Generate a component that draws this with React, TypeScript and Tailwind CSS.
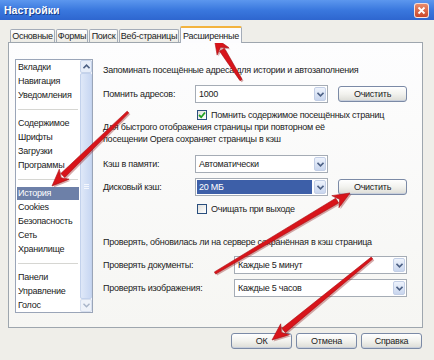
import React from "react";

type Pt = { x1: number; y1: number; x2: number; y2: number };

function Arrow({ x1, y1, x2, y2 }: Pt) {
  const dx = x2 - x1;
  const dy = y2 - y1;
  const len = Math.sqrt(dx * dx + dy * dy);
  const ux = dx / len;
  const uy = dy / len;
  const nx = -uy;
  const ny = ux;
  const headLen = 15;
  const headW = 7;
  const bx = x2 - ux * headLen;
  const by = y2 - uy * headLen;
  const tw = 1.2;
  const hw = 2.8;
  const shaft = [
    [x1 + nx * tw, y1 + ny * tw],
    [bx + nx * hw, by + ny * hw],
    [bx - nx * hw, by - ny * hw],
    [x1 - nx * tw, y1 - ny * tw],
  ];
  const head = [
    [x2, y2],
    [bx + nx * headW - ux * 2, by + ny * headW - uy * 2],
    [bx + ux * 3, by + uy * 3],
    [bx - nx * headW - ux * 2, by - ny * headW - uy * 2],
  ];
  const p = (a: number[][]) => a.map((q) => q.join(",")).join(" ");
  return (
    <g>
      <polygon points={p(shaft)} fill="#8a0c0c" transform="translate(1.5,1.5)" opacity="0.35" />
      <polygon points={p(head)} fill="#8a0c0c" transform="translate(1.5,1.5)" opacity="0.35" />
      <polygon points={p(shaft)} fill="#d8141a" stroke="#a80e12" strokeWidth="0.6" />
      <polygon points={p(head)} fill="#d8141a" stroke="#a80e12" strokeWidth="0.6" />
    </g>
  );
}

function Chevron() {
  return (
    <svg width="7" height="5" viewBox="0 0 7 5">
      <path d="M0.5 0.8 L3.5 3.8 L6.5 0.8" fill="none" stroke="#4d6185" strokeWidth="1.6" />
    </svg>
  );
}

function Combo({ value, selected, w }: { value: string; selected?: boolean; w: string }) {
  return (
    <div className={`flex h-[18px] ${w} items-stretch border border-[#a5acb5] bg-white`}>
      <div className="flex flex-1 items-center p-[1px]">
        <div
          className={`flex h-full w-full items-center pl-[2px] ${
            selected ? "bg-[#3d5fa8] text-white" : "text-[#222]"
          }`}
        >
          {value}
        </div>
      </div>
      <div className="m-[1px] flex w-[12px] items-center justify-center rounded-[2px] border border-[#c3cfe6] bg-gradient-to-b from-[#eef3fc] to-[#c9d6ee]">
        <Chevron />
      </div>
    </div>
  );
}

function Btn({ label, w }: { label: string; w: string }) {
  return (
    <div
      className={`flex h-[16px] ${w} items-center justify-center rounded-[3px] border border-[#7b8aa6] bg-gradient-to-b from-[#ffffff] via-[#f2f2ee] to-[#dcdcd6] text-[#222] shadow-[inset_0_-1px_0_#c8cfdc]`}
    >
      {label}
    </div>
  );
}

function Check({ checked }: { checked?: boolean }) {
  return (
    <div className="flex h-[10px] w-[10px] items-center justify-center border border-[#2a4f7e] bg-gradient-to-br from-[#e0e0dc] to-white">
      {checked && (
        <svg width="8" height="8" viewBox="0 0 8 8">
          <path d="M1 4 L3.2 6.2 L7 1.5" fill="none" stroke="#21a121" strokeWidth="1.8" />
        </svg>
      )}
    </div>
  );
}

const groups: string[][] = [
  ["Вкладки", "Навигация", "Уведомления"],
  ["Содержимое", "Шрифты", "Загрузки", "Программы"],
  ["История", "Cookies", "Безопасность", "Сеть", "Хранилище"],
  ["Панели", "Управление", "Голос"],
];

function ListBox() {
  return (
    <div className="flex h-[254px] w-[78px] shrink-0 border border-[#9aa5b8] bg-white">
      <div className="flex flex-1 flex-col">
        {groups.map((g, gi) => (
          <React.Fragment key={gi}>
            {gi > 0 && (
              <div className="flex h-[14px] items-center px-[2px]">
                <div className="h-px w-full bg-[#d6d6d2]" />
              </div>
            )}
            {g.map((it) => (
              <div key={it} className="flex h-[14px] items-center pl-[1px] pr-[1px]">
                <div
                  className={`flex h-[13px] w-full items-center pl-[1px] ${
                    it === "История" ? "bg-[#6d80a8] text-white" : "text-[#222]"
                  }`}
                >
                  {it}
                </div>
              </div>
            ))}
          </React.Fragment>
        ))}
      </div>
      <div className="flex w-[12px] flex-col bg-[#f4f6fa]">
        <div className="flex h-[13px] items-center justify-center rounded-[2px] border border-[#c6d3ea] bg-[#e6edf9]">
          <svg width="7" height="5" viewBox="0 0 7 5">
            <path d="M0.5 4.2 L3.5 1.2 L6.5 4.2" fill="none" stroke="#4d6185" strokeWidth="1.6" />
          </svg>
        </div>
        <div className="flex flex-1 items-center justify-center rounded-[2px] border border-[#c3d2ec] bg-gradient-to-r from-[#dfe8f8] to-[#c8d7f2]">
          <div className="flex flex-col gap-[1px]">
            <div className="h-px w-[5px] bg-[#f4f7fd]" />
            <div className="h-px w-[5px] bg-[#f4f7fd]" />
            <div className="h-px w-[5px] bg-[#f4f7fd]" />
          </div>
        </div>
        <div className="flex h-[13px] items-center justify-center rounded-[2px] border border-[#d6dfef] bg-[#eef2f9]">
          <svg width="7" height="5" viewBox="0 0 7 5">
            <path d="M0.5 0.8 L3.5 3.8 L6.5 0.8" fill="none" stroke="#a8b4c8" strokeWidth="1.4" />
          </svg>
        </div>
      </div>
    </div>
  );
}

export default function App() {
  const tabs = ["Основные", "Формы", "Поиск", "Веб-страницы"];
  const tabW = ["w-[45px]", "w-[32px]", "w-[29px]", "w-[60px]"];
  return (
    <div className="relative h-[360px] w-[434px] overflow-hidden whitespace-nowrap bg-[#efeee9] font-['Liberation_Sans',Arial,sans-serif] text-[9px] leading-[12px] tracking-[-0.25px] text-[#222]">
      {/* Title bar */}
      <div className="flex h-[20px] items-center justify-between bg-gradient-to-b from-[#5c97ee] via-[#3a78de] to-[#2e66cf] pl-[4px] pr-[5px]">
        <div className="text-[10.5px] font-bold tracking-[0px] text-white [text-shadow:1px_1px_0_#1a3f8a]">Настройки</div>
        <div className="flex h-[15px] w-[15px] items-center justify-center rounded-[3px] border border-white/80 bg-gradient-to-b from-[#e88a6a] to-[#c9462a]">
          <svg width="9" height="9" viewBox="0 0 9 9">
            <path d="M1.5 1.5 L7.5 7.5 M7.5 1.5 L1.5 7.5" stroke="white" strokeWidth="1.8" />
          </svg>
        </div>
      </div>

      {/* Tabs */}
      <div className="mt-[6px] flex h-[16px] items-end pl-[10px]">
        {tabs.map((t, i) => (
          <div
            key={t}
            className={`mr-px flex h-[13px] ${tabW[i]} items-center justify-center rounded-t-[2px] border border-b-0 border-[#a4acb8] bg-gradient-to-b from-white to-[#ecebe5] text-[#222]`}
          >
            {t}
          </div>
        ))}
        <div className="relative z-10 -mb-px flex h-[17px] w-[62px] items-center justify-center rounded-t-[2px] border-x border-[#a4acb8] border-t-[2px] border-t-[#f3b33e] bg-[#fcfcfe] text-[#222]">
          Расширенные
        </div>
      </div>

      {/* Panel */}
      <div className="ml-[8px] flex h-[286px] w-[415px] border border-[#9ea6ae] bg-gradient-to-b from-[#fdfdfe] to-[#f6f6f3] pl-[6px] pt-[16px]">
        <ListBox />
        <div className="ml-[10px] flex flex-col">
          <div className="mt-[5px] h-[12px]">Запоминать посещённые адреса для истории и автозаполнения</div>
          <div className="mt-[9px] flex items-center">
            <div className="w-[92px]">Помнить адресов:</div>
            <Combo value="1000" w="w-[133px]" />
            <div className="ml-[10px]">
              <Btn label="Очистить" w="w-[69px]" />
            </div>
          </div>
          <div className="mt-[6px] flex h-[12px] items-center pl-[94px]">
            <Check checked />
            <div className="ml-[4px]">Помнить содержимое посещённых страниц</div>
          </div>
          <div className="mt-[0px]">Для быстрого отображения страницы при повторном её</div>
          <div>посещении Opera сохраняет страницы в кэш</div>
          <div className="mt-[10px] flex items-center">
            <div className="w-[92px]">Кэш в памяти:</div>
            <Combo value="Автоматически" w="w-[133px]" />
          </div>
          <div className="mt-[5px] flex items-center">
            <div className="w-[92px]">Дисковый кэш:</div>
            <Combo value="20 МБ" selected w="w-[133px]" />
            <div className="ml-[10px]">
              <Btn label="Очистить" w="w-[69px]" />
            </div>
          </div>
          <div className="mt-[7px] flex h-[12px] items-center pl-[94px]">
            <Check />
            <div className="ml-[4px]">Очищать при выходе</div>
          </div>
          <div className="mt-[21px] h-[12px]">Проверять, обновилась ли на сервере сохранённая в кэш страница</div>
          <div className="mt-[8px] flex items-center">
            <div className="w-[131px]">Проверять документы:</div>
            <Combo value="Каждые 5 минут" w="w-[173px]" />
          </div>
          <div className="mt-[5px] flex items-center">
            <div className="w-[131px]">Проверять изображения:</div>
            <Combo value="Каждые 5 часов" w="w-[173px]" />
          </div>
        </div>
      </div>

      {/* Bottom buttons */}
      <div className="mt-[5px] flex justify-end gap-[4px] pr-[12px]">
        <Btn label="ОК" w="w-[61px]" />
        <Btn label="Отмена" w="w-[61px]" />
        <Btn label="Справка" w="w-[61px]" />
      </div>

      {/* Annotation arrows */}
      <svg className="pointer-events-none absolute left-0 top-0" width="434" height="360">
        <Arrow x1={241} y1={80} x2={214} y2={37} />
        <Arrow x1={128} y1={112} x2={52} y2={186} />
        <Arrow x1={215} y1={273} x2={350} y2={193} />
        <Arrow x1={372} y1={258} x2={272} y2={340} />
      </svg>
    </div>
  );
}
